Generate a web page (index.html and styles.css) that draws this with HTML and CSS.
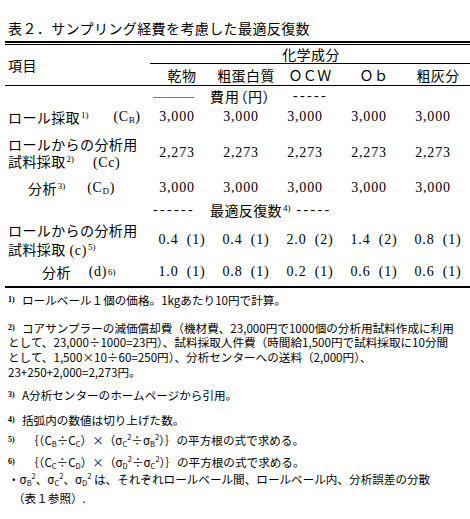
FILE: index.html
```html
<!DOCTYPE html>
<html lang="ja">
<head>
<meta charset="utf-8">
<title>表２</title>
<link rel="stylesheet" href="styles.css">
</head>
<body>
<div class="page">
  <h1 class="title">表２．サンプリング経費を考慮した最適反復数</h1>
  <div class="rule-double"></div>
  <div class="table">
    <div class="cell item-head">項目</div>
    <div class="cell group-head">化学成分</div>
    <div class="cell col-head">乾物</div>
    <div class="cell col-head">粗蛋白質</div>
    <div class="cell col-head">ＯＣＷ</div>
    <div class="cell col-head">Ｏｂ</div>
    <div class="cell col-head">粗灰分</div>

    <div class="cell"></div>
    <div class="cell section"><span class="bar">───</span><span class="sec-text sec-cost">費用（円）</span><span class="hy hy-cost">-----</span></div>

    <div class="cell label"><span>ロール採取<sup class="lsup">1)</sup></span><span class="sym sym1">(C<sub>B</sub>)</span></div>
    <div class="cell val cost">3,000</div>
    <div class="cell val cost">3,000</div>
    <div class="cell val cost">3,000</div>
    <div class="cell val cost">3,000</div>
    <div class="cell val cost">3,000</div>

    <div class="cell label two-line"><div class="lines"><div class="ln17">ロールからの分析用</div><div class="ln17">試料採取<sup class="lsup">2)</sup><span class="sym sym2">(Cc)</span></div></div></div>
    <div class="cell val cost">2,273</div>
    <div class="cell val cost">2,273</div>
    <div class="cell val cost">2,273</div>
    <div class="cell val cost">2,273</div>
    <div class="cell val cost">2,273</div>

    <div class="cell label indent1"><span>分析<sup class="lsup">3)</sup></span><span class="sym sym3">(C<sub>D</sub>)</span></div>
    <div class="cell val cost">3,000</div>
    <div class="cell val cost">3,000</div>
    <div class="cell val cost">3,000</div>
    <div class="cell val cost">3,000</div>
    <div class="cell val cost">3,000</div>

    <div class="cell"></div>
    <div class="cell section"><span class="hy">------</span><span class="sec-text sec-rep">最適反復数<sup class="lsup">4)</sup></span><span class="hy hy-rep">-----</span></div>

    <div class="cell label two-line"><div class="lines"><div class="ln19">ロールからの分析用</div><div class="ln19">試料採取<span class="sym sym4">(c)</span><sup class="lsup">5)</sup></div></div></div>
    <div class="cell val rep">0.4 (1)</div>
    <div class="cell val rep">0.4 (1)</div>
    <div class="cell val rep">2.0 (2)</div>
    <div class="cell val rep">1.4 (2)</div>
    <div class="cell val rep">0.8 (1)</div>

    <div class="cell label indent2"><span>分析</span><span class="sym sym5">(d)</span><sup class="lsup">6)</sup></div>
    <div class="cell val rep">1.0 (1)</div>
    <div class="cell val rep">0.8 (1)</div>
    <div class="cell val rep">0.2 (1)</div>
    <div class="cell val rep">0.6 (1)</div>
    <div class="cell val rep">0.6 (1)</div>
  </div>

  <div class="notes">
    <p class="note n1"><span class="fn">1)</span>ロールベール１個の価格。1kgあたり10円で計算。</p>
    <p class="note n2"><span class="fn">2)</span>コアサンプラーの減価償却費（機材費、23,000円で1000個の分析用試料作成に利用<br>として、23,000÷1000=23円）、試料採取人件費（時間給1,500円で試料採取に10分間<br>として、1,500×10÷60=250円）、分析センターへの送料（2,000円）、<br>23+250+2,000=2,273円。</p>
    <p class="note n3"><span class="fn">3)</span>A分析センターのホームページから引用。</p>
    <p class="note n4"><span class="fn">4)</span>括弧内の数値は切り上げた数。</p>
    <p class="note n5"><span class="fn">5)</span><span class="formula">｛（C<sub>B</sub>÷C<sub>C</sub>）×（σ<sub>C</sub><sup>2</sup>÷σ<sub>B</sub><sup>2</sup>）｝</span>の平方根の式で求める。</p>
    <p class="note n6"><span class="fn">6)</span><span class="formula">｛（C<sub>C</sub>÷C<sub>D</sub>）×（σ<sub>D</sub><sup>2</sup>÷σ<sub>C</sub><sup>2</sup>）｝</span>の平方根の式で求める。</p>
    <p class="note n7">・σ<sub>B</sub><sup>2</sup>、σ<sub>C</sub><sup>2</sup>、σ<sub>D</sub><sup>2</sup> は、それぞれロールベール間、ロールベール内、分析誤差の分散</p>
    <p class="note n8">（表１参照）.</p>
  </div>
</div>
</body>
</html>
```

FILE: styles.css
```css
* {
  box-sizing: border-box;
}

html, body {
  margin: 0;
  background: #fff;
  color: #000;
  font-family: "Noto Sans CJK JP", sans-serif;
  overflow: hidden;
}

.page {
  width: 470px;
  padding-left: 5px;
}

.title {
  margin: 0;
  height: 41px;
  padding: 18px 0 0 3px;
  font-size: 14px;
  line-height: 20px;
  font-weight: normal;
  letter-spacing: 0.4px;
  white-space: nowrap;
}

.rule-double {
  height: 4px;
  border-top: 2px solid #000;
  border-bottom: 1px solid #000;
}

.table {
  display: grid;
  grid-template-columns: 145px repeat(5, 64px);
  grid-template-rows: 19px 22px 20px 22px 49px 22px 22px 37px 28px;
  border-bottom: 2px solid #000;
  font-size: 14px;
  letter-spacing: 0.4px;
  white-space: nowrap;
}

.cell {
  display: flex;
  align-items: center;
  min-width: 0;
}

.item-head {
  grid-row: 1 / span 2;
  padding-left: 3px;
  border-bottom: 1px solid #000;
}

.group-head {
  grid-column: 2 / span 5;
  justify-content: center;
  border-bottom: 1px solid #000;
  padding-left: 2px;
}

.col-head {
  justify-content: center;
  border-bottom: 1px solid #000;
}

.section {
  grid-column: 2 / span 5;
  padding-left: 3px;
}

.bar {
  letter-spacing: 0;
  font-size: 13.7px;
}

.sec-text {
  font-feature-settings: "palt";
}

.sec-cost {
  margin-left: 16px;
  letter-spacing: 1px;
}

.sec-rep {
  margin-left: 15px;
}

.hy {
  font-family: "Liberation Serif", serif;
  letter-spacing: 2.34px;
}

.hy-cost {
  margin-left: 22px;
}

.hy-rep {
  margin-left: 6px;
}

.label {
  padding-left: 3px;
}

.ln17 {
  height: 17px;
  line-height: 17px;
}

.ln19 {
  height: 19px;
  line-height: 19px;
}

.indent1 {
  padding-left: 23px;
}

.indent2 {
  padding-left: 37px;
}

.lsup {
  font-family: "Liberation Serif", serif;
  font-size: 9px;
  letter-spacing: 0;
  vertical-align: 5px;
  line-height: 0;
  margin-left: 1px;
}

.sym {
  font-family: "Liberation Serif", serif;
  letter-spacing: 0.6px;
}

.sym sub {
  font-size: 9px;
  vertical-align: -2px;
  line-height: 0;
}

.sym1 { margin-left: 25px; }
.sym2 { margin-left: 19px; }
.sym3 { margin-left: 22px; }
.sym4 { margin-left: 4px; }
.sym5 { margin-left: 18px; }

.val {
  justify-content: center;
  font-family: "Liberation Serif", "Noto Sans CJK JP", serif;
  letter-spacing: 0.8px;
}

.cost {
  padding-right: 10px;
}

.rep {
  word-spacing: 4px;
}

.notes {
  font-size: 11.6px;
  line-height: 14.7px;
  white-space: nowrap;
}

.note {
  margin: 0;
  padding-left: 3px;
}

.fn {
  display: inline-block;
  width: 14px;
  font-family: "Liberation Serif", serif;
  font-size: 8px;
  font-weight: bold;
  vertical-align: 3px;
  line-height: 0;
}

.note sub, .note sup {
  font-size: 7.5px;
  line-height: 0;
}

.note sub {
  vertical-align: -2px;
}

.note sup {
  vertical-align: 5px;
}

.formula {
  margin-left: 5px;
}

.n1 { margin-top: 5px; }
.n2 { margin-top: 13px; }
.n3 { margin-top: 8px; }
.n4 { margin-top: 11px; }
.n5 { margin-top: 5px; }
.n6 { margin-top: 7px; }
.n7 { margin-top: 3px; }
.n8 { margin-top: 4px; padding-left: 8px; }
```
